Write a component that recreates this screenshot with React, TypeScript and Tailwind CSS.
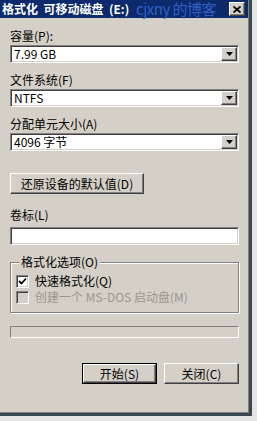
import React from "react";

const font = "font-['Noto_Sans_CJK_SC','Noto_Sans',sans-serif]";

const raised =
  "border border-t-white border-l-white border-r-[#404040] border-b-[#404040] shadow-[inset_-1px_-1px_0_#808080] bg-[#d4d0c8]";
const sunken =
  "border border-t-[#808080] border-l-[#808080] border-r-white border-b-white shadow-[inset_1px_1px_0_#404040,inset_-1px_-1px_0_#d4d0c8]";

function Combo({ value }: { value: string }) {
  return (
    <div className={`mt-[2px] h-[18px] w-[229px] flex items-stretch bg-white ${sunken} p-[1px]`}>
      <div className="flex-1 flex items-center pl-[2px] text-[12px] leading-[14px] text-black">{value}</div>
      <div className={`w-[16px] flex items-center justify-center ${raised}`}>
        <svg width="7" height="4" viewBox="0 0 7 4">
          <polygon points="0,0 7,0 3.5,4" fill="black" />
        </svg>
      </div>
    </div>
  );
}

function Label({ text, className = "" }: { text: string; className?: string }) {
  return <div className={`h-[14px] text-[12px] leading-[14px] text-black ${className}`}>{text}</div>;
}

function CheckRow({ label, checked, disabled }: { label: string; checked?: boolean; disabled?: boolean }) {
  return (
    <div className="h-[16px] flex items-center gap-[6px]">
      <div className={`w-[13px] h-[13px] ${sunken} ${disabled ? "bg-[#d4d0c8]" : "bg-white"} flex items-center justify-center`}>
        {checked && (
          <svg width="9" height="9" viewBox="0 0 9 9">
            <polyline points="1,4 3.5,6.5 8,1.5" fill="none" stroke="black" strokeWidth="1.8" />
          </svg>
        )}
      </div>
      <span className={`text-[12px] leading-[14px] ${disabled ? "text-[#9a968e]" : "text-black"}`}>{label}</span>
    </div>
  );
}

export default function App() {
  return (
    <div className={`w-[257px] h-[421px] bg-[#e4e4e4] overflow-hidden ${font}`}>
      <div className="w-[252px] h-[416px] border-r-[3px] border-b-[3px] border-[#3a4852]">
        <div className="w-[249px] h-[413px] border-r border-b border-[#808080] bg-[#d4d0c8] flex flex-col">
          {/* 标题栏 */}
          <div className="relative h-[18px] bg-[#0c2a6c] flex items-center pl-[2px] pr-[3px]">
            <span className="text-white font-bold text-[12px] leading-[14px] whitespace-pre">格式化  可移动磁盘  (E:)</span>
            <span className="absolute left-[136px] top-0 text-[15px] leading-[18px] tracking-[-0.5px] text-[#3d6fe0]/80 whitespace-pre">cjxny 的博客</span>
            <div className={`relative z-10 ml-auto w-[16px] h-[14px] flex items-center justify-center ${raised}`}>
              <svg width="8" height="7" viewBox="0 0 8 7">
                <path d="M0.5 0.5 L7.5 6.5 M7.5 0.5 L0.5 6.5" stroke="black" strokeWidth="1.8" />
              </svg>
            </div>
          </div>

          <div className="px-[10px] flex flex-col">
            <Label text="容量(P):" className="mt-[11px]" />
            <Combo value="7.99 GB" />
            <Label text="文件系统(F)" className="mt-[10px]" />
            <Combo value="NTFS" />
            <Label text="分配单元大小(A)" className="mt-[10px]" />
            <Combo value="4096 字节" />

            <button className={`mt-[22px] w-[134px] h-[21px] text-[12px] leading-[14px] text-black ${raised}`}>
              还原设备的默认值(D)
            </button>

            <Label text="卷标(L)" className="mt-[14px]" />
            <div className={`mt-[5px] h-[18px] w-[229px] bg-white ${sunken}`} />

            <fieldset className="mt-[10px] w-[229px] border border-[#808080] shadow-[1px_1px_0_white,inset_1px_1px_0_white] pl-[5px] pb-[7px] pt-[4px]">
              <legend className="ml-[3px] px-[2px] bg-[#d4d0c8] text-[12px] leading-[14px] text-black">格式化选项(O)</legend>
              <CheckRow label="快速格式化(Q)" checked />
              <CheckRow label="创建一个 MS-DOS 启动盘(M)" disabled />
            </fieldset>

            <div className="mt-[13px] h-[12px] w-[229px] border border-t-[#808080] border-l-[#808080] border-r-white border-b-white" />

            <div className="mt-[25px] w-[229px] flex justify-end gap-[7px]">
              <button className="w-[75px] h-[21px] border border-black p-0">
                <div className={`w-full h-full flex items-center justify-center text-[12px] leading-[14px] text-black ${raised}`}>
                  开始(S)
                </div>
              </button>
              <button className={`w-[75px] h-[21px] text-[12px] leading-[14px] text-black ${raised}`}>关闭(C)</button>
            </div>
          </div>
        </div>
      </div>
    </div>
  );
}
